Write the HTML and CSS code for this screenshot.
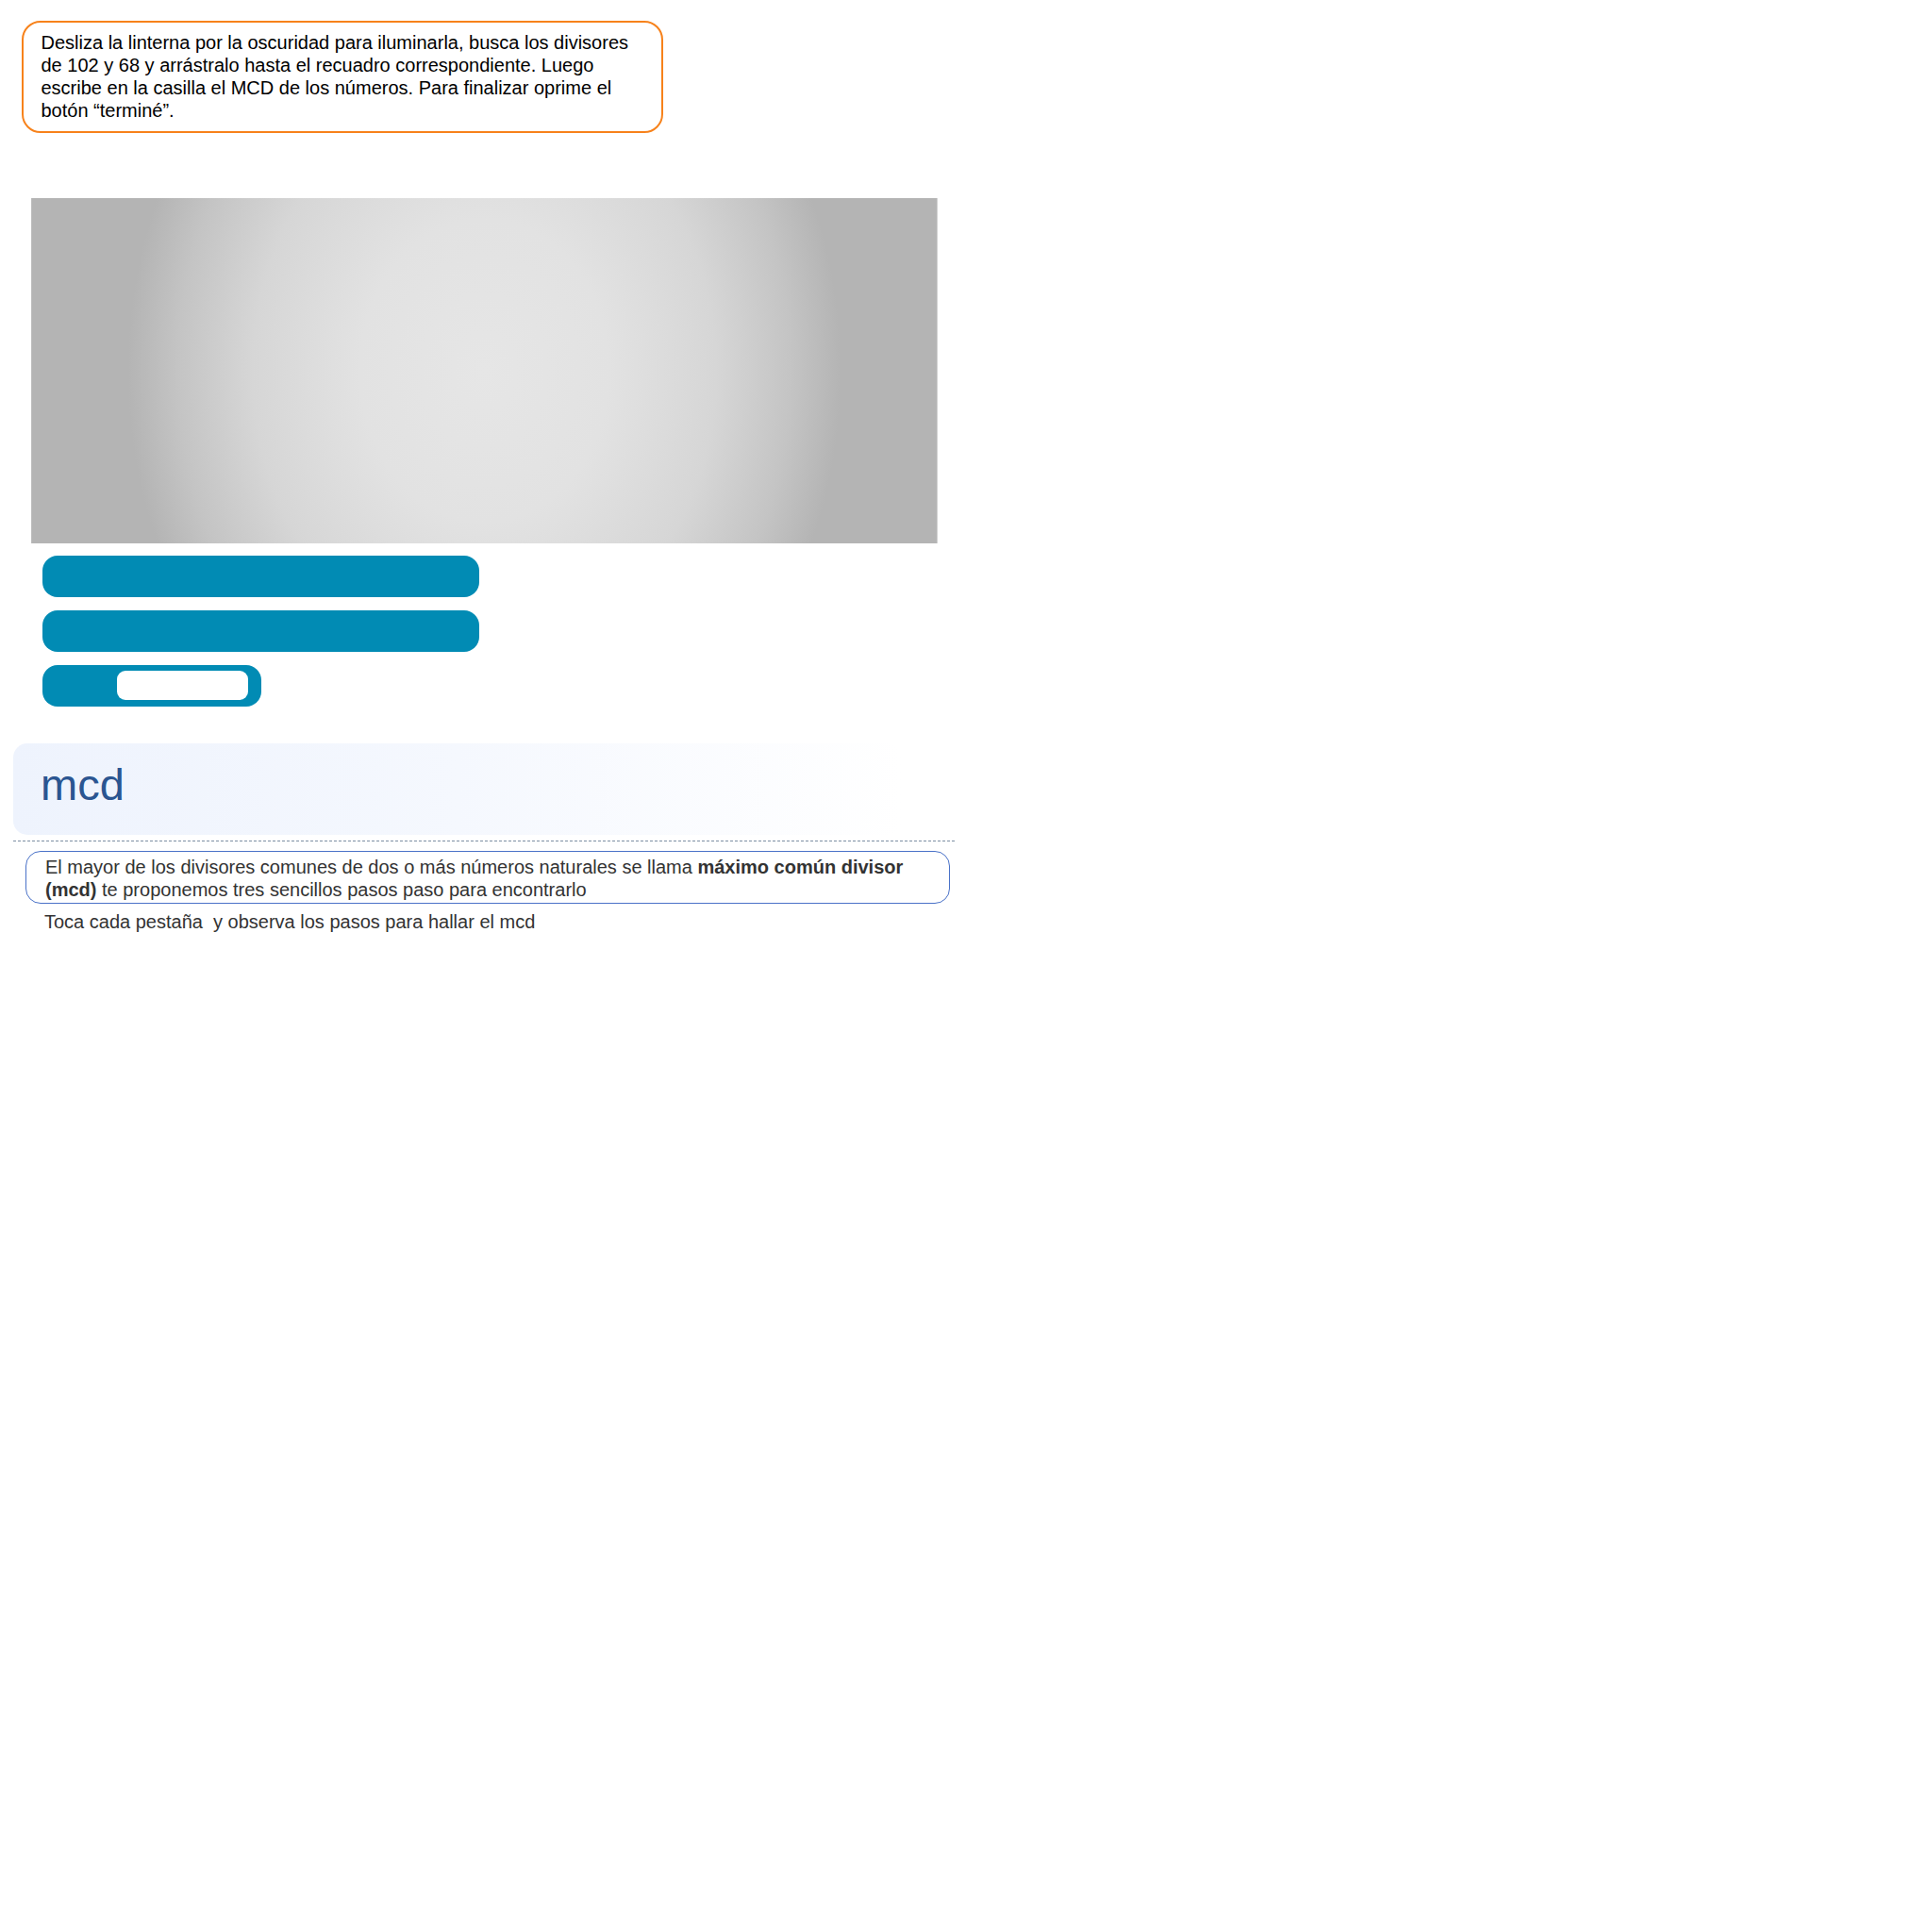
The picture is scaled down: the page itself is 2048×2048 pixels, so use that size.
FILE: index.html
```html
<!DOCTYPE html>
<html lang="es">
<head>
<meta charset="utf-8">
<title>mcd</title>
<link rel="stylesheet" href="styles.css">
</head>
<body>
  <div class="instructions">
    Desliza la linterna por la oscuridad para iluminarla, busca los divisores de 102 y 68 y arrástralo hasta el recuadro correspondiente. Luego escribe en la casilla el MCD de los números. Para finalizar oprime el botón “terminé”.
  </div>

  <div class="stage"></div>

  <div class="bars">
    <div class="bar"></div>
    <div class="bar"></div>
    <div class="bar bar-short"><div class="bar-input"></div></div>
  </div>

  <div class="title-box">
    <h1 class="title">mcd</h1>
  </div>
  <div class="divider"></div>

  <div class="definition">
    El mayor de los divisores comunes de dos o más números naturales se llama <strong>máximo común divisor (mcd)</strong> te proponemos tres sencillos pasos paso para encontrarlo
  </div>
  <p class="hint">Toca cada pestaña&nbsp; y observa los pasos para hallar el mcd</p>
</body>
</html>
```

FILE: styles.css
```css
html, body {
  margin: 0;
  padding: 0;
  background: #ffffff;
}

body {
  font-family: "Liberation Sans", Arial, sans-serif;
  color: #000;
}

.instructions {
  box-sizing: border-box;
  margin: 22px 0 0 23px;
  width: 680px;
  height: 119px;
  border: 2.5px solid #f7821b;
  border-radius: 20px;
  padding: 8.5px 16px 0 18.5px;
  font-size: 20px;
  line-height: 24px;
  color: #000;
}

.stage {
  box-sizing: border-box;
  margin: 69px 0 0 33px;
  width: 961px;
  height: 366px;
  background:
    radial-gradient(ellipse 378px 460px at 50% 50%,
      #e6e6e6 0%,
      #e2e2e2 35%,
      #d6d6d6 65%,
      #c4c4c4 86%,
      #b4b4b4 100%);
  border-right: 1px solid #d2d2d2;
  border-left: 1px solid #bcbcbc;
}

.bars {
  display: flex;
  flex-direction: column;
  gap: 14px;
  margin: 12.5px 0 0 45px;
}

.bar {
  width: 463px;
  height: 44px;
  background: #018bb4;
  border-radius: 16px;
}

.bar-short {
  width: 232px;
  display: flex;
  align-items: center;
  justify-content: flex-end;
  box-sizing: border-box;
  padding-right: 14px;
}

.bar-input {
  width: 139px;
  height: 31px;
  background: #ffffff;
  border-radius: 9px;
}

.title-box {
  box-sizing: border-box;
  margin: 39px 0 0 14px;
  width: 942px;
  height: 97px;
  border-radius: 15px;
  background: linear-gradient(to right, #eef3fd 0%, #f5f8fe 50%, #ffffff 100%);
  padding: 0 0 0 29px;
}

.title {
  margin: 0;
  padding-top: 16px;
  font-weight: normal;
  font-size: 47px;
  line-height: 56px;
  color: #2a5591;
}

.divider {
  margin: 6px 0 0 14px;
  width: 998px;
  border-top: 1px dashed #7d8fa3;
}

.definition {
  box-sizing: border-box;
  margin: 10px 0 0 27px;
  width: 980px;
  height: 56px;
  border: 1px solid #4a72c8;
  border-radius: 16px;
  padding: 4.5px 10px 0 20px;
  font-size: 20px;
  line-height: 24px;
  color: #333333;
}

.definition strong {
  font-weight: bold;
}

.hint {
  margin: 7px 0 0 47px;
  font-size: 20px;
  line-height: 24px;
  color: #333333;
}
```
